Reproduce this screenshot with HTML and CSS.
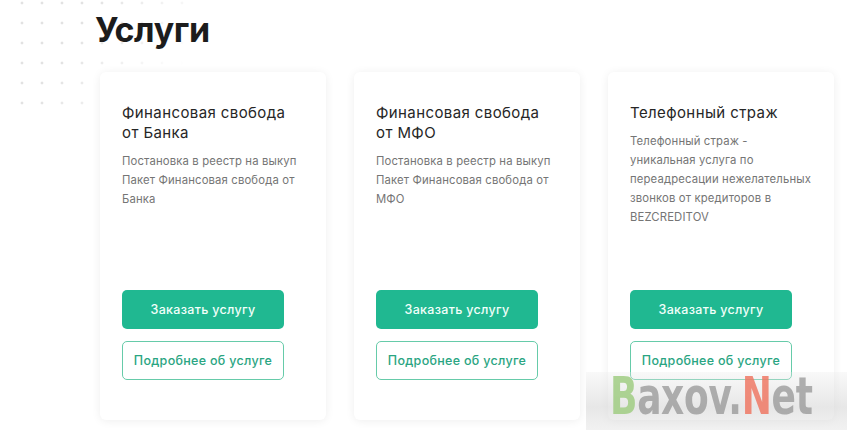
FILE: index.html
```html
<!DOCTYPE html>
<html lang="ru">
<head>
<meta charset="utf-8">
<link rel="stylesheet" href="styles.css">
</head>
<body>
<div class="page">
  <div class="dots"></div>
  <h1 class="title">Услуги</h1>
  <div class="cards">
    <div class="card">
      <div class="card-title">Финансовая свобода от Банка</div>
      <div class="card-desc">Постановка в реестр на выкуп Пакет Финансовая свобода от Банка</div>
      <div class="actions">
        <a class="btn btn-fill">Заказать услугу</a>
        <a class="btn btn-line">Подробнее об услуге</a>
      </div>
    </div>
    <div class="card">
      <div class="card-title">Финансовая свобода от МФО</div>
      <div class="card-desc">Постановка в реестр на выкуп Пакет Финансовая свобода от МФО</div>
      <div class="actions">
        <a class="btn btn-fill">Заказать услугу</a>
        <a class="btn btn-line">Подробнее об услуге</a>
      </div>
    </div>
    <div class="card">
      <div class="card-title">Телефонный страж</div>
      <div class="card-desc">Телефонный страж - уникальная услуга по переадресации нежелательных звонков от кредиторов в BEZCREDITOV</div>
      <div class="actions">
        <a class="btn btn-fill">Заказать услугу</a>
        <a class="btn btn-line">Подробнее об услуге</a>
      </div>
    </div>
  </div>
  <div class="watermark"><span class="wm-text"><span class="wm-b">B</span>axov.<span class="wm-n">N</span>et</span></div>
</div>
</body>
</html>
```

FILE: styles.css
```css
* { box-sizing: border-box; }
html, body { margin: 0; padding: 0; background: #fff; }
body { font-family: Inter, "Noto Sans", sans-serif; color: #222; }
.page {
  position: relative;
  width: 847px;
  height: 437px;
  overflow: hidden;
  padding: 10px 0 0 0;
}
.dots {
  position: absolute;
  left: 12px;
  top: -7px;
  width: 180px;
  height: 125px;
  background-image: radial-gradient(circle, #e2e2e2 1.2px, transparent 1.7px);
  background-size: 20px 20px;
  -webkit-mask-image: linear-gradient(120deg, #000 35%, transparent 85%);
  mask-image: linear-gradient(120deg, #000 35%, transparent 85%);
  z-index: 0;
}
.title {
  position: relative;
  z-index: 1;
  margin: 0 0 0 95px;
  font-size: 34px;
  line-height: 40px;
  font-weight: 700;
  color: #1c1c1c;
  letter-spacing: -0.4px;
}
.cards {
  position: relative;
  z-index: 1;
  display: flex;
  gap: 28px;
  margin: 22px 0 0 100px;
}
.card {
  width: 226px;
  height: 348px;
  background: #fff;
  border-radius: 6px;
  box-shadow: 0 1px 10px rgba(0,0,0,0.07);
  padding: 31px 20px 40px 22px;
  display: flex;
  flex-direction: column;
}
.card-title {
  font-size: 15px;
  line-height: 20px;
  color: #262626;
  letter-spacing: 0.4px;
  padding-right: 4px;
}
.card-desc {
  margin-top: 9px;
  font-size: 11.3px;
  line-height: 19px;
  color: #757575;
  letter-spacing: 0.15px;
  padding-right: 2px;
}
.actions {
  margin-top: auto;
  display: flex;
  flex-direction: column;
  gap: 12px;
}
.btn {
  display: flex;
  align-items: center;
  justify-content: center;
  width: 162px;
  height: 39px;
  border-radius: 5px;
  font-size: 12.5px;
  font-weight: 500;
  letter-spacing: 0.3px;
}
.btn-fill {
  background: #20b891;
  color: #f2fffa;
}
.btn-line {
  border: 1.5px solid #66cba9;
  color: #2aa582;
  background: #fff;
}
.watermark {
  position: absolute;
  left: 586px;
  top: 372px;
  width: 261px;
  height: 58px;
  z-index: 2;
  background: linear-gradient(180deg, rgba(235,235,235,0.3) 0%, rgba(215,215,215,0.6) 60%, rgba(225,225,225,0.45) 100%);
  padding: 0 0 0 24px;
}
.wm-text {
  display: inline-block;
  font-family: "DejaVu Sans Condensed", "Liberation Sans Narrow", sans-serif;
  font-weight: 700;
  font-size: 40px;
  line-height: 40px;
  letter-spacing: -0.3px;
  color: rgba(150,150,150,0.75);
  transform: scaleY(1.3);
  transform-origin: 0 0;
  margin-top: -2px;
}
.wm-b { color: rgba(160,205,130,0.85); }
.wm-n { color: rgba(238,120,100,0.85); }
```
